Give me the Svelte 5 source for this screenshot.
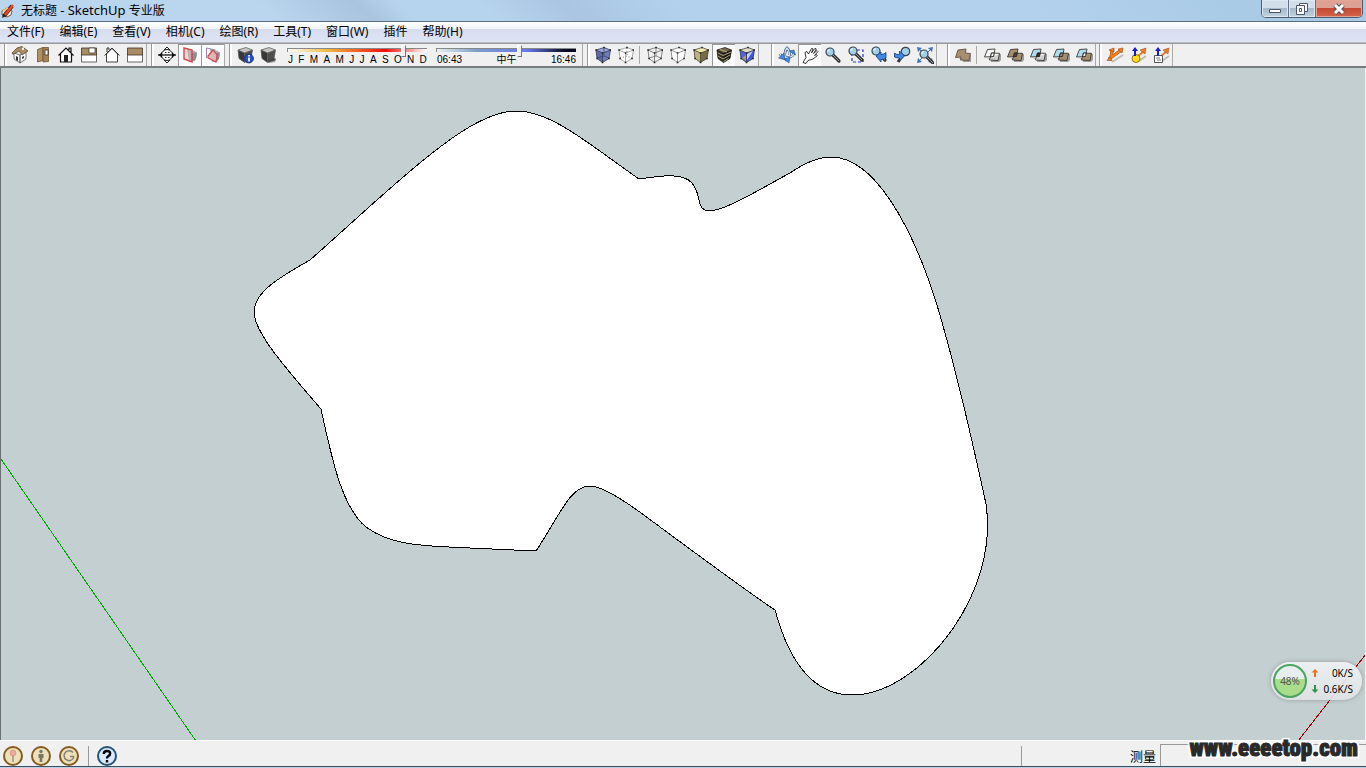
<script>
  const menus = ['文件(F)', '编辑(E)', '查看(V)', '相机(C)', '绘图(R)', '工具(T)', '窗口(W)', '插件', '帮助(H)'];
  const months = ['J', 'F', 'M', 'A', 'M', 'J', 'J', 'A', 'S', 'O', 'N', 'D'];
  const views = [['iso', '等轴视图'], ['top', '顶视图'], ['front', '前视图'], ['right', '右视图'], ['back', '后视图'], ['left', '左视图']];
  const sections = [['section', '截平面'], ['plane', '显示截平面', true], ['cut', '显示剖切面', true]];
  const shadows = [['shadowinfo', '阴影设置'], ['shadow', '显示阴影']];
  const faces1 = [['xray', 'X光透视'], ['backedges', '后边线']];
  const faces2 = [['wire', '线框'], ['hidden', '消隐'], ['shaded', '着色'], ['texture', '贴图', true], ['mono', '单色']];
  const cameras = [['orbit', '转动'], ['pan', '平移', true], ['zoom', '缩放'], ['zoomwin', '窗口缩放'], ['prev', '上一个'], ['next', '下一个'], ['extents', '充满视窗']];
  const solids = [['intersect', '相交'], ['union', '并集'], ['subtract', '去除'], ['trim', '修剪'], ['split', '拆分']];
  const plugins = [['arrows', '移动'], ['ball', '实体'], ['page', '文件']];
  let month = $state(84);
  let time = $state(60);
</script>

{#snippet cube(top, left, right, line)}
  <path fill={top} d="M2 4 10 1.5 16.5 4 8.5 7z" />
  <path fill={left} d="M2 4 8.5 7 8.5 16.5 3 12.5z" />
  <path fill={right} d="M8.5 7 16.5 4 15 12.5 8.5 16.5z" />
  <path fill="none" stroke={line} stroke-width=".7" d="M2 4 10 1.5 16.5 4 15 12.5 8.5 16.5 3 12.5zL8.5 7 16.5 4M8.5 7v9.5" />
{/snippet}

{#snippet corners()}
  <path fill="#222" d="M1.300 3.300h1.500v1.500H1.300zM9.300 .8h1.500v1.500H9.300zM15.500 3.300H17v1.500h-1.500zM7.800 6.300h1.500v1.500H7.800zM7.800 15.700h1.500v1.500H7.800zM2.300 11.800h1.500v1.500H2.300zM14.300 11.800h1.500v1.500h-1.500z" />
{/snippet}

{#snippet lens(x, y)}
  <path stroke="#333" stroke-width="3.2" stroke-linecap="round" d="M{x + 3} {y + 3}l6 6" />
  <path stroke="#999" stroke-width="1" d="M{x + 3} {y + 3}l6 6" />
  <circle cx={x} cy={y} r="4" fill="#9fd0e8" stroke="#39474e" stroke-width="1.2" />
  <path stroke="#e2f5ff" stroke-width="1.4" fill="none" d="M{x - 2.3} {y - .2}q.3-2 2.3-2.2" />
{/snippet}

{#snippet solid(a, b, mid)}
  <path fill="#5558" d="M4 13h4v3h8l2-2V8h-2z" />
  <path fill={a} stroke="#3b3830" stroke-width=".9" d="M4.500 3.500 12 3 10.500 10.500 1.500 11z" />
  <path fill={b} stroke="#3b3830" stroke-width=".9" d="M8.500 7 16.500 7.300 15 14.500 6.500 14z" />
  <path fill={mid} stroke="#26241f" stroke-width=".9" d="M8.500 7 11.200 7.100 10.500 10.500 7.500 10.700z" />
{/snippet}

{#snippet icon(k)}
  <svg viewBox="0 0 18 18" aria-hidden="true">
    {#if k === 'iso'}
      <path fill="#fff" stroke="#555" stroke-width=".8" d="M3 7v6l6 4V9zM9 9v8l6-4V6z" />
      <path fill="#a98c62" stroke="#5a4c38" stroke-width=".8" d="M1 7 6 2l5-1.5L17 5l-6 4-3-4-6 3.5z" />
      <path fill="#333" d="M5 10l2 1v4l-2-1zM11 11l2-1v2l-2 1z" /><path fill="#eee" d="M11 2l2-1v3h-2z" />
    {:else if k === 'top'}
      <path fill="#b1915f" stroke="#6b5636" stroke-width=".8" d="M3.5 3.5 9 1.5v13L3.5 16z" />
      <path fill="#a68354" stroke="#6b5636" stroke-width=".8" d="M9 1.5h5.5v14L9 16z" /><path fill="#fff" stroke="#333" stroke-width=".8" d="M11 4h3v5h-3z" />
    {:else if k === 'front'}
      <path fill="#fff" d="M3 8 9 3l6 5v8H3z" /><path fill="none" stroke="#111" stroke-width="1.2" d="M3.5 8v8h11V8M1.5 9.5 9 2l7.5 7.5M14 7V2h-2v2" />
      <path d="M7 9h4v7H7z" fill="#222" />
    {:else if k === 'right' || k === 'left'}
      <path fill="#fff" stroke="#444" stroke-width=".8" d="M1.5 8h15v8h-15z" /><path fill="#a98c62" stroke="#3e3222" stroke-width=".8" d="M1.5 2h15v7h-15z" />
      {#if k === 'right'}<path fill="#fff" stroke="#333" stroke-width=".7" d="M9 2h6v5H9z" />{/if}
    {:else if k === 'back'}
      <path fill="#fff" stroke="#444" d="M3.5 8v8h11V8L9 2.5z" /><path fill="none" stroke="#333" d="M1.5 9.5 9 2l7.5 7.5M4 6V2h2v2" />
    {:else if k === 'section'}
      <path fill="#fff" stroke="#222" d="M1 9h3M14 9h3M9 1l-3 3h6zM9 17l-3-3h6z" /><circle cx="9" cy="9" r="5.500" fill="#fff" stroke="#222" />
      <path stroke="#111" stroke-width="1.3" d="M0 9h18" /><path stroke="#333" d="M7 6.500h1.500M10 6.500h1.500M7 11.500h1.500M10 11.500h1.500" /><path fill="#111" d="M1 9l3-3v6zM17 9l-3-3v6z" />
    {:else if k === 'plane' || k === 'cut'}
      <path fill="#a9adb2" d="M6 3l8 2 2 4-2 6-6 1z" /><path fill="#898d94" d="M10 8l6-2-1 7-5 3z" />
      {#if k === 'plane'}
        <path fill="#eaa6" stroke="#d5474e" stroke-width="1.4" d="M3 2l8 2v12l-8-3z" />
      {:else}
        <path fill="#dfb6b6" stroke="#d5474e" stroke-width="1.2" d="M4 10l5-6 4 5-1 7-8-4z" /><path stroke="#98a" fill="none" d="M2.500 12V2l9 2" />
      {/if}
    {:else if k === 'shadowinfo' || k === 'shadow'}
      <path fill="#999" d="M9 15l8-3-1 4-6 1z" />
      {@render cube('#c5c5c2', '#373737', '#4e4e4e', '#555')}
      {#if k === 'shadowinfo'}
        <circle cx="13" cy="12.5" r="4.4" fill="#2752c3" stroke="#173078" /><path stroke="#fff" stroke-width="1.7" d="M13 11.5v4M13 9v1.4" />
      {:else}<path fill="#444" d="M9 16.500l8-2.500-2-2-6 2z" />{/if}
    {:else if k === 'xray'}
      {@render cube('#9ba6dc', '#606aa4', '#717dbb', '#25294a')}<path stroke="#33396b" stroke-width=".7" fill="none" d="M10 2v8M3 12l7-2 5 2" />{@render corners()}
    {:else if k === 'backedges'}
      {@render cube('#fff', '#fff', '#fff', '#888')}<path stroke="#777" stroke-dasharray="1 2" fill="none" d="M10 2v8M3 12l7-2 5 2" />{@render corners()}
    {:else if k === 'wire'}
      {@render cube('none', 'none', 'none', '#555')}<path stroke="#666" stroke-width=".7" fill="none" d="M10 2v8M3 12l7-2 5 2" />{@render corners()}
    {:else if k === 'hidden'}
      {@render cube('#fff', '#fff', '#fff', '#666')}{@render corners()}
    {:else if k === 'shaded'}
      {@render cube('#eee7ae', '#bdb27c', '#746b48', '#37331f')}{@render corners()}
    {:else if k === 'texture'}
      {@render cube('#796b49', '#2e2a20', '#171612', '#111')}
      <path stroke="#b6a77c" fill="none" d="M3 7l5 2.5L16 6M3 10l5 3 7-4M5 3.5l7 2.5M8.5 15.5l5-3" />
    {:else if k === 'mono'}
      {@render cube('#dfddbd', '#5064d7', '#4058db', '#252a45')}<path fill="#c9cfdb" d="M9 14V8l6-3z" /><path fill="#b29569" d="M4 12l4-3v6z" />{@render corners()}
    {:else if k === 'orbit'}
      <path fill="none" stroke="#2b486e" stroke-width="2.600" d="M9 15C6 11 6 5 9 2q3 3 2.500 7M2 8q2 4 8 3.500 6-1 5.500-4.500" />
      <path fill="none" stroke="#d6e8fb" stroke-width="1.4" d="M9 15C6 11 6 5 9 2q3 3 2.500 7M2 8q2 4 8 3.500 6-1 5.500-4.500" />
      <path fill="#3f86ee" stroke="#24446f" stroke-width=".5" d="M6 13l5 4 1-6zM11 5l5-1 1.500 5zM.5 12l5.500-5 1 7z" />
    {:else if k === 'pan'}
      <path fill="#fff" stroke="#222" stroke-width=".9" d="M2 16.500l3-5-1-5 2-1 1.500 2.500 3-5.500 1.500.3-1.500 4 3.500-4.500 1.300.7-2.800 4.500 3.500-3 1 1-3.500 4 2-1 .8 1.200-4.300 3.300-5 1.500-2 3z" />
    {:else if k === 'zoom'}
      {@render lens(6, 6)}
    {:else if k === 'zoomwin'}
      <path fill="none" stroke="#2434d5" stroke-width="1.2" stroke-dasharray="3 2" d="M5 4h11v12H5z" />{@render lens(6, 5)}
    {:else if k === 'prev'}
      {@render lens(6, 5)}<path fill="#3f87e8" stroke="#173c73" stroke-width=".8" d="M6 10l5-4v2.500q3 0 5-2V12q-2 2-5 1.500V16z" />
    {:else if k === 'next'}
      <path stroke="#333" stroke-width="3" d="M10 9l-5 7" /><circle cx="12.500" cy="5.500" r="4.200" fill="#9fd0e8" stroke="#34434b" stroke-width="1.200" />
      <path fill="#3f87e8" stroke="#173c73" stroke-width=".8" d="M1.500 7q2 2 5 1.500V5l5 5-5 5v-3q-3 0-5-1z" />
    {:else if k === 'extents'}
      <path fill="#3e73b8" d="M1 1l5 1-4 4zM17 1l-5 1 4 4zM1 17l1-5 4 4zM17 17l-5-1 4-4z" /><path stroke="#3e73b8" d="M2 2l14 14M16 2 2 16" />
      {@render lens(8, 8)}
    {:else if k === 'shell'}
      <path fill="#5558" d="M4 13h5v3h8V9z" /><path fill="#a58f70" stroke="#5b5041" stroke-width=".9" d="M4 4l8-1-.5 4 5 .5-1.500 7-8.500-.5.5-3-5.500 .5z" />
    {:else if k === 'intersect'}{@render solid('#fff8', '#fff8', '#fff')}
    {:else if k === 'union'}{@render solid('#a58f70', '#a58f70', '#554839')}
    {:else if k === 'subtract'}{@render solid('#acdcf2', '#fff8', '#343026')}
    {:else if k === 'trim'}{@render solid('#acdcf2', '#a58f70', '#a58f70')}
    {:else if k === 'split'}{@render solid('#acdcf2', '#a58f70', '#fff')}
    {:else if k === 'arrows'}
      <path stroke="#bbb" stroke-width="2" d="M6 16 17 9" /><path stroke="#98480e" stroke-width="3.200" fill="none" d="M3 13 14 5M5 12 6 4" />
      <path stroke="#f28122" stroke-width="2.2" fill="none" d="M3 13 14 5M5 12 6 4" /><path fill="#f28122" stroke="#98480e" stroke-width=".6" d="M12 3l5-1-1 5zM3 4l5-2v4zM1 14.500l3-4 2 4z" />
    {:else}
      <path stroke="#bbb" stroke-width="2" d="M10 15 17 10" />
      <path stroke="#ef7d25" stroke-width="2" d="M8 11 15 5" /><path fill="#ef7d25" stroke="#8d4819" stroke-width=".5" d="M11 4l6-2-1 6z" />
      {#if k === 'ball'}<circle cx="7" cy="12.500" r="4" fill="#ffdc22" stroke="#9a7110" />{:else}<path fill="#fff" stroke="#555" d="M2.5 9.5h8v7h-8z" /><path stroke="#777" d="M4 12h4M5 14h4" />{/if}
      <path stroke="#1520c7" stroke-width="2" d="M6 10V4" /><path fill="#1520c7" d="M3 5 6 1l3 4z" />
    {/if}
  </svg>
{/snippet}

{#snippet tools(list)}
  {#each list as [k, name, on]}
    <button class="tool" class:on aria-label={name} aria-pressed={!!on}>{@render icon(k)}</button>
  {/each}
{/snippet}

<div class="app">
  <header class="title">
    <svg class="logo" viewBox="0 0 16 16" aria-hidden="true">
      <path fill="#eee" stroke="#7e5a47" d="M2 8l5-3 5 3-1 4-4 2-5-2z" /><path stroke="#5e1c12" stroke-width="4" d="M4 13 12 3" /><path stroke="#df4f29" stroke-width="2.4" d="M5 12 13 2" /><path stroke="#f7c36c" stroke-width="1.5" d="M3 8l5-3" /><path fill="#222" d="M2 15l1-4 3 2z" />
    </svg>
    <h1>无标题 <span>- SketchUp</span> 专业版</h1>
    <div class="winbtns">
      <button aria-label="最小化"><svg width="14" height="14" viewBox="0 0 14 14"><path fill="#fff" stroke="#4b5669" d="M1.5 7.5h11v3h-11z" /></svg></button>
      <button aria-label="还原"><svg width="14" height="14" viewBox="0 0 14 14"><path fill="#fff" stroke="#4b5669" d="M4.500 1.500h8v8h-8z" /><path fill="#fff" stroke="#4b5669" d="M1.500 3.500h8v9h-8zM4.500 6.500h2v3h-2z" /></svg></button>
      <button class="close" aria-label="关闭"><svg width="14" height="14" viewBox="0 0 14 14"><path stroke="#555264" stroke-width="5" d="M3 3l8 8M11 3l-8 8" /><path stroke="#fff" stroke-width="3" d="M3 3l8 8M11 3l-8 8" /></svg></button>
    </div>
  </header>

  <nav class="menu">
    {#each menus as m}<button>{m}</button>{/each}
  </nav>

  <div class="toolbar">
    <div class="group">{@render tools(views)}</div>
    <div class="group">{@render tools(sections)}</div>
    <div class="group shadows">
      {@render tools(shadows)}
      <div class="slide">
        <input class="date" type="range" aria-label="日期" bind:value={month} />
        <div class="labels">{#each months as m}<span>{m}</span>{/each}</div>
      </div>
      <div class="slide">
        <input class="time" type="range" aria-label="时间" bind:value={time} />
        <div class="labels"><span>06:43</span><span>中午</span><span>16:46</span></div>
      </div>
    </div>
    <div class="group faces">{@render tools(faces1)}<i class="sep"></i>{@render tools(faces2)}</div>
    <div class="group cameras">{@render tools(cameras)}</div>
    <div class="group solids">{@render tools([['shell', '外壳']])}<i class="sep"></i>{@render tools(solids)}</div>
    <div class="group">{@render tools(plugins)}</div>
  </div>

  <main class="canvas">
    <svg class="model" viewBox="1 68 1364 672" preserveAspectRatio="xMidYMid slice" shape-rendering="crispEdges" aria-label="模型">
      <path stroke="#00a800" d="M1 459 196 741" />
      <path stroke="#a80000" d="M1298 741 1366 654" />
      <path fill="#fff" stroke="#000" d="M310 260C350 225 400 177 440 147C470 124 495 111 516 111C552 111 590 145 639 179C655 177 663 175 674 176C690 177 696 184 699 200C700 207 703 211 709 211C725 211 762 188 790 173C803 164 817 157 831 157C874 157 912 225 937 305C955 365 970 430 986 504C992 545 980 590 952 630C925 668 887 695 852 695C815 695 790 665 775 610C745 590 705 560 664 530C635 508 605 486 590 486C570 486 560 515 536 551L470 548C420 546 390 545 366 527C343 508 333 465 321 409C290 373 254 333 254 312C254 292 280 277 310 260Z" />
    </svg>
    <aside class="net">
      <div class="gauge">48%</div>
      <div class="rates">
        <svg viewBox="0 0 8 8" aria-hidden="true"><path fill="#f26f21" d="M4 0 7.500 3.500H5V8H3V3.500H.5z" /></svg><span>0K/S</span>
        <svg viewBox="0 0 8 8" aria-hidden="true"><path fill="#2c9440" d="M4 8 .5 4.500H3V0h2v4.500h2.500z" /></svg><span>0.6K/S</span>
      </div>
    </aside>
  </main>

  <footer class="status">
    <button class="round" aria-label="地理位置"><svg viewBox="0 0 20 20"><circle cx="10" cy="10" r="9" fill="#eee0b8" stroke="#855c1f" stroke-width="2" /><circle cx="10" cy="7" r="3" fill="#efaa9b" stroke="#c78a7c" stroke-width=".6" /><path stroke="#968d7b" stroke-width="1.4" d="M10 10v6" /></svg></button>
    <button class="round" aria-label="作者"><svg viewBox="0 0 20 20"><circle cx="10" cy="10" r="9" fill="#eee0b8" stroke="#855c1f" stroke-width="2" /><circle cx="10" cy="5.500" r="1.700" fill="#777468" /><path fill="#777468" d="M7.500 8h5v4H11.300v4H8.700v-4H7.500z" /></svg></button>
    <button class="round" aria-label="版权"><svg viewBox="0 0 20 20"><circle cx="10" cy="10" r="9" fill="#eee0b8" stroke="#855c1f" stroke-width="2" /><path fill="none" stroke="#868174" stroke-width="1.500" d="M14 6.500A5 5 0 1 0 14.500 12V10.500H11" /></svg></button>
    <i class="bar"></i>
    <button class="round" aria-label="帮助"><svg viewBox="0 0 20 20"><circle cx="10" cy="10" r="9" fill="#dceaff" stroke="#245476" stroke-width="2" /><path fill="none" stroke="#080808" stroke-width="2.400" d="M6.800 8q0-3 3.200-3t3.200 2.600q0 1.600-2 2.700-1.200.7-1.200 2.200M10 14v2.400" /></svg></button>
    <label for="measure">测量</label>
    <div class="field">
      <input id="measure" type="text" />
      <span class="mark">www.eeeetop.com</span>
    </div>
  </footer>
  <div class="taskbar"></div>
</div>

<style>
  :global(body) { margin: 0; overflow: hidden; }
  .app { height: 100vh; display: flex; flex-direction: column; background: #f0f0f0; color: #000; font: 12px/16px "Noto Sans", "Noto Sans CJK SC", sans-serif; }
  button { border: 0; padding: 0; background: none; font: inherit; color: inherit; }
  .title { height: 21px; flex: none; display: flex; align-items: center; border-bottom: 1px solid #5b6b80; background: linear-gradient(42deg, #bad5ee 0 20%, #a8c4df 27%, #b7d4ee 30% 36%, #a9c5e2 42%, #b3d1ec 50% 75%, #aacbe5 90%); }
  .logo { width: 16px; height: 16px; flex: none; }
  h1 { margin: 0 auto 0 5px; font-size: 12px; font-weight: 400; line-height: 16px; white-space: nowrap; }
  h1 span { font-size: 13px; }
  .winbtns { align-self: flex-start; height: 17px; margin-right: 3px; display: flex; border: 1px solid #4b5a6c; border-top: 0; border-radius: 0 0 5px 5px; overflow: hidden; }
  .winbtns button { width: 27px; display: grid; place-items: center; border-right: 1px solid #607086; background: linear-gradient(#d2dfeb 50%, #a6b8ca 50%, #c3d2df); box-shadow: inset 0 0 0 1px #dce8f2; }
  .winbtns .close { width: 46px; border: 0; background: linear-gradient(#dda294 45%, #c44a31 50%, #d4654b); box-shadow: inset 0 0 0 1px #e3a493; }
  .menu { flex: none; height: 20px; display: flex; align-items: center; gap: 15px; padding-left: 7px; background: linear-gradient(#fff, #f0f3fa 35%, #d7dcef 37%, #dfe4f5); border-bottom: 1px solid #b8bdcc; white-space: nowrap; }
  .toolbar { flex: none; height: 22px; display: flex; gap: 4px; padding-left: 4px; border-top: 1px solid #999; border-bottom: 2px solid #777c7d; background: #f0f0f0; }
  .group { display: flex; align-items: center; padding-left: 3px; border-left: 1px solid #999; border-right: 1px solid #aaa; box-shadow: inset 2px 0 #fff; }
  .faces { margin-right: 8px; }
  .cameras { margin-right: 6px; }
  .solids { margin-right: -1px; }
  .tool { width: 23px; height: 22px; flex: none; display: grid; place-items: center; }
  .tool svg { width: 18px; height: 18px; display: block; }
  .tool.on { background: #fbfbfb; box-shadow: inset 1px 1px #999, inset -1px -1px #fff; }
  .sep { width: 1px; height: 18px; margin: 0 3px 0 2px; background: #aaa; }
  .shadows { padding-right: 6px; }
  .slide { width: 140px; margin-left: 8px; align-self: stretch; }
  .slide + .slide { margin-left: 9px; }
  input[type='range'] { appearance: none; display: block; width: 100%; height: 11px; margin: 0; background: none; }
  input[type='range']::-webkit-slider-runnable-track { height: 4px; border-top: 1px solid #888; border-left: 1px solid #888; box-sizing: border-box; }
  .date::-webkit-slider-runnable-track { background: linear-gradient(90deg, #fff, #f1bb3f 28%, #f30d0d 70%, #fff); }
  .time::-webkit-slider-runnable-track { background: linear-gradient(90deg, #e8f0f2, #7e9fc8 28%, #6978e9 65%, #090a22 92%); }
  input[type='range']::-webkit-slider-thumb { appearance: none; width: 5px; height: 12px; margin-top: -4px; border: 1px solid; border-color: #fff #777 #777 #fff; background: #f0f0f0; }
  .labels { display: flex; justify-content: space-between; padding-left: 1px; font: 10px/9px "Liberation Sans", "Noto Sans CJK SC", sans-serif; }
  .canvas { position: relative; flex: 1; min-height: 0; margin-right: 1px; border-left: 1px solid #6a6f70; background: #c4cfd1; overflow: hidden; }
  .model { display: block; width: 100%; height: 100%; fill: none; }
  .net { position: absolute; right: 3px; bottom: 40px; display: flex; align-items: center; gap: 4px; padding: 2px 9px 2px 2px; border-radius: 20px; background: linear-gradient(#eef2f4ee, #dfe2e4ee); box-shadow: 0 0 4px #7779; font-size: 10px; }
  .gauge { width: 30px; height: 30px; display: grid; place-items: center; border: 2px solid #49a45e; border-radius: 50%; background: linear-gradient(#e6eeee 45%, #a9dc8b 45%); color: #555; }
  .rates { display: grid; grid-template-columns: 8px 34px; align-items: center; font: 10px/16px "Noto Sans", sans-serif; text-align: right; white-space: nowrap; }
  .rates span { justify-self: end; }
  .rates svg { width: 8px; height: 8px; }
  .status { flex: none; height: 25px; display: flex; align-items: center; gap: 8px; padding-left: 3px; border-top: 1px solid #fff; font-size: 13px; }
  .round { width: 20px; height: 20px; margin-top: 5px; }
  .round svg { display: block; width: 20px; height: 20px; }
  .bar { width: 1px; height: 20px; margin: 4px 0 0 1px; background: #999; }
  .status label { margin-left: auto; margin-top: 5px; width: 26px; padding-left: 108px; height: 20px; line-height: 20px; border-left: 1px solid #999; white-space: nowrap; margin-right: -4px; }
  .field { position: relative; width: 206px; align-self: stretch; margin-top: 3px; }
  .field input { box-sizing: border-box; display: block; width: 100%; height: 100%; border: 0; border-top: 1px solid #999; border-left: 1px solid #999; background: #f0f0f0; }
  .mark { position: absolute; right: 8px; bottom: 5px; font: 900 23px/24px "Roboto Condensed", Roboto, sans-serif; color: #292929; -webkit-text-stroke: 1px #292929; text-shadow: -2px 0 #fff, 2px 0 #fff, 0 -2px #fff, 0 2px #fff, -2px -2px 1px #fff, 2px 2px 1px #fff, 2px -2px 1px #fff, -2px 2px 1px #fff; }
  .taskbar { flex: none; height: 1px; border-top: 1px solid #394f64; background: #bdd0e1; }
</style>
